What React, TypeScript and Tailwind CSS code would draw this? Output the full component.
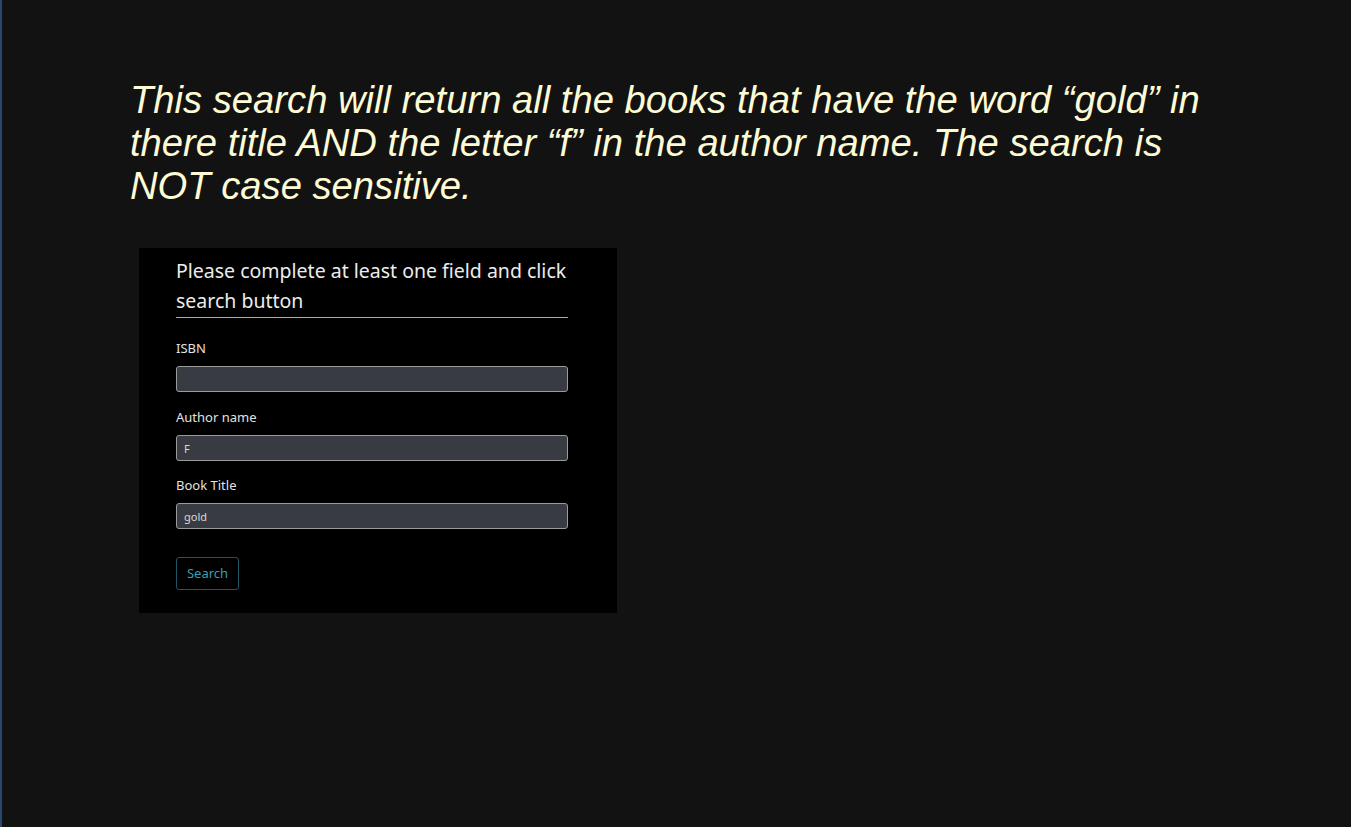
import React from 'react';

const fields = [
  { label: 'ISBN', value: '', mt: 'mt-[20px]' },
  { label: 'Author name', value: 'F', mt: 'mt-[15px]' },
  { label: 'Book Title', value: 'gold', mt: 'mt-[14px]' },
];

export default function App() {
  return (
    <div className="min-h-screen w-full bg-[#121212] border-l-2 border-[#28476b]">
      <p className="pl-[128px] pt-[78px] w-[1220px] text-[38.2px] leading-[43px] italic text-[#fdfbd6] font-['Liberation_Sans',Arial,sans-serif]">
        This search will return all the books that have the word “gold” in there title AND the letter “f” in the
        author name. The search is NOT case sensitive.
      </p>

      <div className="ml-[137px] mt-[41px] w-[478px] bg-black pt-[8px] pb-[23px] pl-[37px] font-['Noto_Sans',sans-serif]">
        <form className="w-[392px]" onSubmit={(e) => e.preventDefault()}>
          <h4 className="text-[19.5px] leading-[30px] text-[#ececec] border-b border-[#a9a9a9] pb-[1px]">
            Please complete at least one field and click search button
          </h4>

          {fields.map((f) => (
            <div key={f.label} className={f.mt}>
              <label className="block text-[13px] leading-[20px] text-[#e2e2e2] mb-[8px]">{f.label}</label>
              <input
                readOnly
                value={f.value}
                className="block w-full h-[26px] rounded-[3px] border border-[#9a9a9a] bg-[#383b42] px-[7px] text-[11px] text-[#d8d8d8] outline-none"
              />
            </div>
          ))}

          <button
            type="submit"
            className="mt-[28px] h-[33px] w-[63px] rounded-[3px] border border-[#1f5664] text-[13px] text-[#3c9fb4]"
          >
            Search
          </button>
        </form>
      </div>
    </div>
  );
}
